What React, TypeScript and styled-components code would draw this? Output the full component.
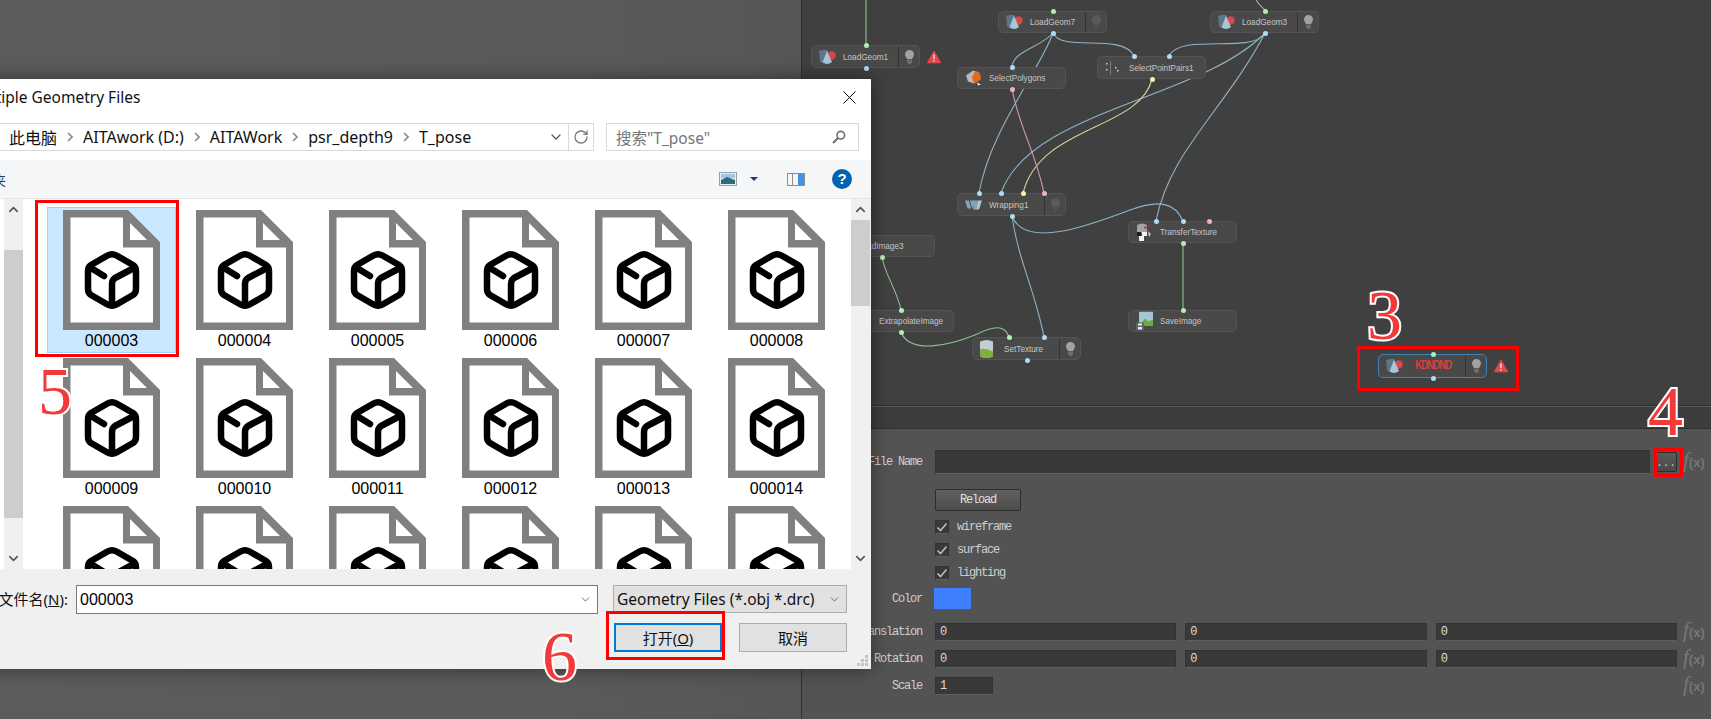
import React from 'react';
import styled, { createGlobalStyle } from 'styled-components';
import { ChevronDown, ChevronUp, RotateCw } from 'lucide-react';

const GlobalStyle = createGlobalStyle`
    html, body {
        margin: 0;
        padding: 0;
        background: #5a5a5a;
    }
    * {
        box-sizing: border-box;
    }
`;

const UI_FONT = `"Noto Sans", "Noto Sans CJK SC", sans-serif`;
const CANVAS_X = 802;

const PORT = {
    blue: '#aedcf5',
    green: '#b3eeb0',
    pink: '#f2b0c6',
    yellow: '#f2f2a8',
};

type PortColor = keyof typeof PORT;

interface PortDef {
    at: number;
    color: PortColor;
    side: 'top' | 'bottom';
}

const top = (at: number, color: PortColor): PortDef => ({ at, color, side: 'top' });
const bottom = (at: number, color: PortColor): PortDef => ({ at, color, side: 'bottom' });

const GeomIcon = () => (
    <svg width="17" height="15" viewBox="0 0 17 15">
        <path d="M0 1.5 L6 0 L9 1 L9 13 L4 14 L1 12 Z" fill="#5b7688" />
        <circle cx="12.5" cy="6" r="4.2" fill="#d9484c" />
        <path d="M8 1.5 L13 12.5 Q8 16.5 3.5 12.5 Z" fill="#a9c6d6" />
    </svg>
);

const PolygonIcon = () => (
    <svg width="17" height="17" viewBox="0 0 17 17">
        <path d="M1 6 L8 1 L14 3 L15 10 L9 14 L3 12 Z" fill="#b9b9b9" />
        <path d="M7 8 L10 1.5 L15 4 L16 10 L9 14 Z" fill="#e8691c" />
        <path d="M12 13 L16 15 L13 16 Z" fill="#eee" />
    </svg>
);

const WrapIcon = () => (
    <svg width="17" height="11" viewBox="0 0 17 11">
        <path d="M0 1 H4 L6 9 H2.5 Z M5 1 H9 L9 5 L7 9 Z M9 1 H13 L11 10 H8 Z" fill="#7fa5b8" />
        <path d="M13 1 H17 L14 10 H11 Z" fill="#a9c6d6" />
    </svg>
);

const PairsIcon = () => (
    <svg width="17" height="14" viewBox="0 0 17 14">
        <rect x="1" y="2" width="1.5" height="1.5" fill="#d0d0d0" />
        <rect x="1" y="8" width="1.5" height="1.5" fill="#d0d0d0" />
        <rect x="5" y="0" width="1" height="14" fill="#6f7d84" />
        <rect x="10" y="6" width="1.5" height="1.5" fill="#d0d0d0" />
        <rect x="12" y="9" width="1.5" height="1.5" fill="#d0d0d0" />
    </svg>
);

const TransferIcon = () => (
    <svg width="16" height="18" viewBox="0 0 16 18">
        <path d="M1 2 Q6 -1 11 2 V10 H1 Z" fill="#9ea3a8" />
        <rect x="8" y="3.5" width="3" height="2" fill="#c43a3a" />
        <rect x="1" y="9" width="4" height="4" fill="#1c1c1c" />
        <rect x="6" y="9" width="5" height="4" fill="#f2f2f2" />
        <rect x="3" y="13" width="5" height="5" fill="#f2f2f2" />
        <path d="M12 8 L15 11 L13 14 Z" fill="#c9c9c9" />
    </svg>
);

const SaveIcon = () => (
    <svg width="17" height="19" viewBox="0 0 17 19">
        <rect x="3" y="0" width="14" height="14" fill="#a4c7d4" />
        <path d="M3 14 L9 7 L12 10 L17 8 V14 Z" fill="#6cab3f" />
        <rect x="0" y="11" width="8" height="8" rx="1" fill="#5e646a" />
        <rect x="2" y="12" width="4" height="2" fill="#e6e6e6" />
        <rect x="2" y="15.5" width="4" height="2.5" fill="#e6e6e6" />
    </svg>
);

const TextureIcon = () => (
    <svg width="13" height="19" viewBox="0 0 13 19">
        <path d="M0 2 Q6.5 -1 13 2 V17 Q6.5 20 0 17 Z" fill="#c3ced0" />
        <path d="M0 10 Q5 8 13 12 V17 Q6.5 20 0 17 Z" fill="#7fb03d" />
    </svg>
);

const Bulb = ({ dim }: { dim?: boolean }) => (
    <svg width="9" height="14" viewBox="0 0 9 14">
        <path
            d="M4.5 0 C7 0 9 2 9 4.5 C9 6.5 7.5 7.5 7 9 H2 C1.5 7.5 0 6.5 0 4.5 C0 2 2 0 4.5 0 Z"
            fill={dim ? '#5a5a5a' : '#a2a2a2'}
        />
        <path d="M2 9.5 H7 V12 L5.5 14 H3.5 L2 12 Z" fill={dim ? '#505050' : '#6e6e6e'} />
    </svg>
);

const WarnIcon = () => (
    <svg width="14" height="13" viewBox="0 0 14 13">
        <path d="M7 0.5 L13.7 12.5 H0.3 Z" fill="#e2494b" stroke="#e2494b" strokeLinejoin="round" />
        <rect x="6.3" y="4" width="1.4" height="4.6" fill="#f4dcdc" />
        <rect x="6.3" y="9.6" width="1.4" height="1.4" fill="#f4dcdc" />
    </svg>
);

const nodes: {
    label: string;
    x: number;
    y: number;
    h: number;
    textAt?: number;
    icon?: React.ReactNode;
    bulb?: 'on' | 'dim';
    warn?: boolean;
    ports: PortDef[];
}[] = [
    { label: 'LoadGeom7', x: 998, y: 11, h: 22, icon: <GeomIcon />, bulb: 'dim', ports: [top(55, 'green'), bottom(55, 'blue')] },
    { label: 'LoadGeom1', x: 811, y: 45, h: 23, icon: <GeomIcon />, bulb: 'on', warn: true, ports: [top(55, 'green'), bottom(55, 'blue')] },
    { label: 'SelectPolygons', x: 957, y: 67, h: 22, icon: <PolygonIcon />, ports: [top(55, 'blue'), bottom(55, 'pink')] },
    { label: 'SelectPointPairs1', x: 1097, y: 56, h: 23, icon: <PairsIcon />, ports: [top(37, 'blue'), top(72, 'blue'), bottom(55, 'yellow')] },
    { label: 'LoadGeom3', x: 1210, y: 11, h: 22, icon: <GeomIcon />, bulb: 'on', ports: [top(55, 'green'), bottom(55, 'blue')] },
    { label: 'Wrapping1', x: 957, y: 193, h: 23, icon: <WrapIcon />, bulb: 'dim', ports: [top(22, 'blue'), top(44, 'blue'), top(66, 'yellow'), top(87, 'pink'), bottom(55, 'blue')] },
    { label: 'TransferTexture', x: 1128, y: 221, h: 22, icon: <TransferIcon />, ports: [top(28, 'blue'), top(55, 'blue'), top(81, 'pink'), bottom(55, 'green')] },
    { label: 'SaveImage', x: 1128, y: 310, h: 22, icon: <SaveIcon />, ports: [top(55, 'green')] },
    { label: 'LoadImage3', x: 826, y: 235, h: 22, ports: [bottom(56, 'green')] },
    { label: 'ExtrapolateImage', x: 845, y: 310, h: 22, textAt: 34, ports: [top(56, 'green'), bottom(56, 'green')] },
    { label: 'SetTexture', x: 972, y: 337, h: 23, icon: <TextureIcon />, bulb: 'on', ports: [top(37, 'green'), top(72, 'blue'), bottom(55, 'blue')] },
];

const wires: { d: string; color: string }[] = [
    { d: 'M866 0 V45', color: '#8fc08f' },
    { d: 'M1256 0 Q1261 7 1265 10', color: '#8fc08f' },
    { d: 'M1053 33 C1040 48 1015 50 1012 66', color: '#8fb3c6' },
    { d: 'M1053 33 C1062 53 1122 32 1134 56', color: '#8fb3c6' },
    { d: 'M1053 33 C1040 70 990 130 979 193', color: '#8fb3c6' },
    { d: 'M1265 33 C1252 55 1182 32 1169 56', color: '#8fb3c6' },
    { d: 'M1265 33 C1200 100 1030 110 1001 193', color: '#8fb3c6' },
    { d: 'M1265 33 C1225 110 1170 150 1156 221', color: '#8fb3c6' },
    { d: 'M1152 79 C1140 130 1040 125 1023 193', color: '#d5d59a' },
    { d: 'M1012 89 C1020 130 1035 150 1044 193', color: '#d79aad' },
    { d: 'M1012 216 C1025 250 1090 225 1130 210 C1160 199 1175 203 1183 221', color: '#8fb3c6' },
    { d: 'M1012 216 C1018 260 1035 290 1044 337', color: '#8fb3c6' },
    { d: 'M882 257 C885 275 897 290 901 310', color: '#8fc08f' },
    { d: 'M901 332 C910 355 950 345 975 335 C995 325 1005 325 1009 337', color: '#8fc08f' },
    { d: 'M1183 243 V310', color: '#8fc08f' },
];

const fileNames = [
    '000003', '000004', '000005', '000006', '000007', '000008',
    '000009', '000010', '000011', '000012', '000013', '000014',
    '000015', '000016', '000017', '000018', '000019', '000020',
];

const crumbs = ['此电脑', 'AITAwork (D:)', 'AITAWork', 'psr_depth9', 'T_pose'];

const FileIcon = () => (
    <svg width="97" height="120" viewBox="0 0 97 120">
        <path d="M0 0 H65 L97 32 V120 H0 Z" fill="#808080" />
        <path d="M7.5 7.5 H60 V37.5 H90 V112.5 H7.5 Z" fill="#fff" />
        <path d="M67 13 L84 30 H67 Z" fill="#fff" />
        <g fill="none" stroke="#000" strokeWidth="6.5" strokeLinejoin="round" strokeLinecap="round">
            <path d="M44.5 45.5 Q49 43 53.5 45.5 L70 55 Q73 57 73 61 V79 Q73 83 70 85 L53.5 94.5 Q49 97 44.5 94.5 L28 85 Q25 83 25 79 V61 Q25 57 28 55 Z" />
            <path d="M71 58 L52 68 Q49 70 49 74 V95" />
            <path d="M28 58 L41 66" />
        </g>
    </svg>
);

const ResizeGrip = () => (
    <svg width="12" height="12" viewBox="0 0 12 12" fill="#c4c4c4">
        <rect x="8" y="0" width="3" height="3" />
        <rect x="4" y="4" width="3" height="3" />
        <rect x="8" y="4" width="3" height="3" />
        <rect x="0" y="8" width="3" height="3" />
        <rect x="4" y="8" width="3" height="3" />
        <rect x="8" y="8" width="3" height="3" />
    </svg>
);

const ScrollTrack = ({ thumbOffset, thumbHeight }: { thumbOffset: number; thumbHeight: number }) => (
    <ScrollBar>
        <ScrollArrow>
            <ChevronUp size={15} strokeWidth={2.4} />
        </ScrollArrow>
        <ScrollThumb $offset={thumbOffset} $height={thumbHeight} />
        <ScrollArrow $end>
            <ChevronDown size={15} strokeWidth={2.4} />
        </ScrollArrow>
    </ScrollBar>
);

const Fx = () => (
    <FxMark>
        <i>f</i>(x)
    </FxMark>
);

const CheckRow = ({ label }: { label: string }) => (
    <PropRow $mt={9}>
        <PropLabel />
        <CheckLine>
            <CheckBox>
                <svg width="12" height="10" viewBox="0 0 12 10">
                    <path d="M1.5 5.5 L4.5 8.5 L10.5 1.5" fill="none" stroke="#bdbdbd" strokeWidth="1.6" />
                </svg>
            </CheckBox>
            <PropText>{label}</PropText>
        </CheckLine>
    </PropRow>
);

const App: React.FC = () => {
    return (
        <Page>
            <GlobalStyle />
            <Backdrop />
            <Editor>
                <Canvas>
                    <Wires viewBox={`${CANVAS_X} 0 909 406`}>
                        {wires.map((wire) => (
                            <path key={wire.d} d={wire.d} stroke={wire.color} fill="none" strokeWidth="1.1" />
                        ))}
                    </Wires>
                    {nodes.map((node) => (
                        <Node key={node.label} $x={node.x - CANVAS_X} $y={node.y} $h={node.h}>
                            <NodeIcon>{node.icon}</NodeIcon>
                            <NodeLabel $at={node.textAt ?? 32}>{node.label}</NodeLabel>
                            {node.bulb && (
                                <BulbCell>
                                    <Bulb dim={node.bulb === 'dim'} />
                                </BulbCell>
                            )}
                            {node.warn && (
                                <NodeWarn>
                                    <WarnIcon />
                                </NodeWarn>
                            )}
                            {node.ports.map((port) => (
                                <Port key={`${port.side}${port.at}`} $at={port.at} $color={PORT[port.color]} $side={port.side} />
                            ))}
                        </Node>
                    ))}
                    <Node $x={1378 - CANVAS_X} $y={354} $h={24} $selected>
                        <NodeIcon>
                            <GeomIcon />
                        </NodeIcon>
                        <ErrorLabel>KDNDND</ErrorLabel>
                        <BulbCell>
                            <Bulb />
                        </BulbCell>
                        <NodeWarn>
                            <WarnIcon />
                        </NodeWarn>
                        <Port $at={55} $color={PORT.green} $side="top" />
                        <Port $at={55} $color={PORT.blue} $side="bottom" />
                    </Node>
                </Canvas>
                <TabBar />
                <PropPanel>
                    <PropRow $mt={0}>
                        <PropLabel>File Name</PropLabel>
                        <FileField>
                            <TextField $h={24} />
                            <BrowseButton>...</BrowseButton>
                        </FileField>
                        <Fx />
                    </PropRow>
                    <PropRow $mt={15}>
                        <PropLabel />
                        <ReloadButton>Reload</ReloadButton>
                    </PropRow>
                    <CheckRow label="wireframe" />
                    <CheckRow label="surface" />
                    <CheckRow label="lighting" />
                    <PropRow $mt={8}>
                        <PropLabel>Color</PropLabel>
                        <Swatch />
                    </PropRow>
                    <PropRow $mt={14}>
                        <PropLabel>Translation</PropLabel>
                        <TripleField>
                            <TextField>0</TextField>
                            <TextField>0</TextField>
                            <TextField>0</TextField>
                        </TripleField>
                        <Fx />
                    </PropRow>
                    <PropRow $mt={9}>
                        <PropLabel>Rotation</PropLabel>
                        <TripleField>
                            <TextField>0</TextField>
                            <TextField>0</TextField>
                            <TextField>0</TextField>
                        </TripleField>
                        <Fx />
                    </PropRow>
                    <PropRow $mt={9}>
                        <PropLabel>Scale</PropLabel>
                        <ScaleField>1</ScaleField>
                        <Fx />
                    </PropRow>
                </PropPanel>
            </Editor>

            <Dialog>
                <TitleBar>
                    <Title>Multiple Geometry Files</Title>
                    <svg width="13" height="13" viewBox="0 0 13 13">
                        <path d="M0.5 0.5 L12.5 12.5 M12.5 0.5 L0.5 12.5" stroke="#000" strokeWidth="1" />
                    </svg>
                </TitleBar>
                <AddressRow>
                    <AddressBox>
                        <Crumbs>
                            {crumbs.map((crumb, i) => (
                                <React.Fragment key={crumb}>
                                    {i > 0 && (
                                        <CrumbArrow viewBox="0 0 6 10" width="6" height="10">
                                            <path d="M1 1 L5 5 L1 9" />
                                        </CrumbArrow>
                                    )}
                                    <span>{crumb}</span>
                                </React.Fragment>
                            ))}
                        </Crumbs>
                        <AddressDrop>
                            <ChevronDown size={16} strokeWidth={1.8} />
                        </AddressDrop>
                        <RefreshCell>
                            <RotateCw size={16} strokeWidth={2} />
                        </RefreshCell>
                    </AddressBox>
                    <SearchBox>
                        <span>搜索"T_pose"</span>
                        <svg width="14" height="14" viewBox="0 0 14 14">
                            <circle cx="8.8" cy="5.2" r="3.8" fill="none" stroke="#6d6d6d" strokeWidth="1.6" />
                            <path d="M6 8 L1 13" stroke="#6d6d6d" strokeWidth="2" />
                        </svg>
                    </SearchBox>
                </AddressRow>
                <Toolbar>
                    <NewFolder>新建文件夹</NewFolder>
                    <ToolSpacer />
                    <svg width="18" height="14" viewBox="0 0 18 14">
                        <rect x="0.5" y="0.5" width="17" height="13" fill="#e8eef2" stroke="#9a9fa3" />
                        <rect x="2" y="2" width="14" height="4" fill="#9cc7e4" />
                        <path d="M2 8 L8 5 L16 8 V12 H2 Z" fill="#2f6a78" />
                    </svg>
                    <ToolCaret />
                    <svg width="18" height="13" viewBox="0 0 18 13">
                        <rect x="0.5" y="0.5" width="17" height="12" fill="#f5f6f7" stroke="#8b8f93" />
                        <rect x="5" y="1" width="1" height="11" fill="#8b8f93" />
                        <rect x="11" y="1" width="6" height="11" fill="#3c95e3" />
                    </svg>
                    <HelpBadge>?</HelpBadge>
                </Toolbar>
                <Main>
                    <LeftNav>
                        <ScrollTrack thumbOffset={30} thumbHeight={268} />
                    </LeftNav>
                    <FileGrid>
                        {fileNames.map((name, i) => (
                            <FileItem key={name} $selected={i === 0}>
                                <FileIcon />
                                <FileName>{name}</FileName>
                            </FileItem>
                        ))}
                    </FileGrid>
                    <ScrollTrack thumbOffset={0} thumbHeight={86} />
                </Main>
                <BottomBar>
                    <FileRow>
                        <FileLabel>
                            文件名(<u>N</u>):
                        </FileLabel>
                        <NameInput>
                            <span>000003</span>
                            <ChevronDown size={13} strokeWidth={1.5} color="#555" />
                        </NameInput>
                        <TypeCombo>
                            <span>Geometry Files (*.obj *.drc)</span>
                            <ChevronDown size={13} strokeWidth={1.5} color="#555" />
                        </TypeCombo>
                    </FileRow>
                    <ButtonRow>
                        <DialogButton $primary>
                            打开(<u>O</u>)
                        </DialogButton>
                        <DialogButton>取消</DialogButton>
                    </ButtonRow>
                    <GripSlot>
                        <ResizeGrip />
                    </GripSlot>
                </BottomBar>
            </Dialog>

            <RedBox $x={35} $y={200} $w={144} $h={157} />
            <RedBox $x={606} $y={611} $w={119} $h={49} />
            <RedBox $x={1357} $y={346} $w={162} $h={45} />
            <RedBox $x={1654} $y={448} $w={29} $h={29} />

            <Annotation $x={38} $y={357} $size={68}>5</Annotation>
            <Annotation $x={542} $y={622} $size={70}>6</Annotation>
            <Annotation $x={1367} $y={281} $size={70}>3</Annotation>
            <Annotation $x={1648} $y={377} $size={70}>4</Annotation>
        </Page>
    );
};
export default App;

const Page = styled.div`
    position: relative;
    display: flex;
    width: 1711px;
    height: 719px;
    overflow: hidden;
`;

const Backdrop = styled.div`
    flex: 0 0 801px;
    background: linear-gradient(90deg, #5c5c5c, #5a5a5a 70%, #565656);
`;

const Editor = styled.div`
    flex: 1;
    display: flex;
    flex-direction: column;
    border-left: 1px solid #2f2f2f;
    min-width: 0;
`;

const Canvas = styled.div`
    position: relative;
    height: 406px;
    background: #404040;
    border-bottom: 1px solid #2e2e2e;
`;

const Wires = styled.svg`
    position: absolute;
    inset: 0;
    width: 909px;
    height: 406px;
`;

const Node = styled.div<{ $x: number; $y: number; $h: number; $selected?: boolean }>`
    position: absolute;
    left: ${(p) => p.$x}px;
    top: ${(p) => p.$y}px;
    width: 109px;
    height: ${(p) => p.$h}px;
    background: #494949;
    border: 1px solid ${(p) => (p.$selected ? '#3f82b8' : '#545454')};
    border-radius: 5px;
`;

const NodeIcon = styled.div`
    position: absolute;
    left: 7px;
    top: 50%;
    transform: translateY(-50%);
    display: flex;
`;

const NodeLabel = styled.span<{ $at: number }>`
    position: absolute;
    left: ${(p) => p.$at - 1}px;
    top: 50%;
    transform: translateY(-50%);
    font: 8.2px "Liberation Sans", sans-serif;
    color: #c6c6c6;
    white-space: nowrap;
`;

const ErrorLabel = styled.span`
    position: absolute;
    left: 36px;
    top: 50%;
    transform: translateY(-50%);
    font: 12px "Liberation Mono", monospace;
    letter-spacing: -1.2px;
    color: #e84040;
    white-space: nowrap;
`;

const BulbCell = styled.div`
    position: absolute;
    right: 0;
    top: 0;
    bottom: 0;
    width: 21px;
    display: flex;
    align-items: center;
    justify-content: center;
    border-left: 1px solid #333;
`;

const NodeWarn = styled.div`
    position: absolute;
    left: 115px;
    top: 50%;
    transform: translateY(-50%);
    display: flex;
`;

const Port = styled.i<{ $at: number; $color: string; $side: 'top' | 'bottom' }>`
    position: absolute;
    left: ${(p) => p.$at - 3.5}px;
    ${(p) => p.$side}: -3.5px;
    width: 5px;
    height: 5px;
    border-radius: 50%;
    background: ${(p) => p.$color};
`;

const TabBar = styled.div`
    height: 23px;
    background: #3d3d3d;
    border-top: 1px solid #5a5a5a;
    border-bottom: 1px solid #2e2e2e;
`;

const PropPanel = styled.div`
    flex: 1;
    background: #535353;
    padding-top: 21px;
    display: flex;
    flex-direction: column;
`;

const PropRow = styled.div<{ $mt: number }>`
    display: grid;
    grid-template-columns: 133px 742px 34px;
    align-items: center;
    margin-top: ${(p) => p.$mt}px;
`;

const PROP_FONT = `12px "Liberation Mono", "Noto Sans CJK SC", monospace`;

const PropLabel = styled.span`
    padding-right: 13px;
    text-align: right;
    font: ${PROP_FONT};
    letter-spacing: -1.2px;
    color: #cfcfcf;
    white-space: nowrap;
`;

const PropText = styled.span`
    font: ${PROP_FONT};
    letter-spacing: -1.2px;
    color: #cfcfcf;
`;

const TextField = styled.div<{ $h?: number }>`
    flex: 1;
    height: ${(p) => p.$h ?? 18}px;
    background: #393939;
    border: 1px solid #333;
    border-bottom-color: #5f5f5f;
    font: ${PROP_FONT};
    line-height: 16px;
    padding-left: 4px;
    color: #dcdcdc;
`;

const FileField = styled.div`
    display: flex;
    align-items: center;
    gap: 5px;
`;

const BrowseButton = styled.div`
    flex: 0 0 20px;
    height: 20px;
    background: linear-gradient(#5a5a5a, #4a4a4a);
    border: 1px solid #2d2d2d;
    border-radius: 2px;
    text-align: center;
    font: 10px/22px "Liberation Mono", monospace;
    letter-spacing: 0.5px;
    color: #ddd;
`;

const TripleField = styled.div`
    display: flex;
    gap: 9px;
`;

const ScaleField = styled(TextField)`
    justify-self: start;
    width: 58px;
`;

const ReloadButton = styled.div`
    justify-self: start;
    width: 86px;
    height: 22px;
    background: linear-gradient(#616161, #4c4c4c);
    border: 1px solid #2d2d2d;
    border-radius: 2px;
    text-align: center;
    font: ${PROP_FONT};
    line-height: 20px;
    letter-spacing: -1.2px;
    color: #e0e0e0;
`;

const CheckLine = styled.div`
    display: flex;
    align-items: center;
    gap: 8px;
    height: 14px;
`;

const CheckBox = styled.div`
    width: 14px;
    height: 14px;
    background: #393939;
    border: 1px solid #333;
    border-bottom-color: #5f5f5f;
    display: flex;
    align-items: center;
    justify-content: center;
`;

const Swatch = styled.div`
    justify-self: start;
    width: 37px;
    height: 21px;
    margin-left: -1px;
    background: #3e7fff;
`;

const FxMark = styled.span`
    padding-left: 6px;
    font: bold 13px "Liberation Sans", sans-serif;
    color: #777;
    white-space: nowrap;
    i {
        font: italic 21px "Liberation Serif", serif;
        line-height: 12px;
    }
`;

const Dialog = styled.div`
    position: absolute;
    left: -40px;
    top: 79px;
    width: 911px;
    height: 590px;
    display: flex;
    flex-direction: column;
    background: #fff;
    box-shadow: 0 0 18px rgba(0, 0, 0, 0.45);
    font-family: ${UI_FONT};
`;

const TitleBar = styled.div`
    flex: 0 0 44px;
    display: flex;
    align-items: center;
    justify-content: space-between;
    padding: 0 15px 8px 8px;
`;

const Title = styled.span`
    font-size: 15.5px;
    color: #111;
`;

const AddressRow = styled.div`
    flex: 0 0 28px;
    display: flex;
    gap: 12px;
    margin-bottom: 9px;
`;

const AddressBox = styled.div`
    flex: 0 0 634px;
    display: flex;
    align-items: center;
    border: 1px solid #d9d9d9;
    padding-left: 48px;
`;

const Crumbs = styled.div`
    flex: 1;
    display: flex;
    align-items: center;
    gap: 10px;
    font-size: 16px;
    color: #111;
`;

const CrumbArrow = styled.svg`
    path {
        fill: none;
        stroke: #8a8a8a;
        stroke-width: 1.6;
    }
`;

const AddressDrop = styled.div`
    display: flex;
    color: #555;
    padding-right: 2px;
`;

const RefreshCell = styled.div`
    flex: 0 0 25px;
    height: 100%;
    display: flex;
    align-items: center;
    justify-content: center;
    border-left: 1px solid #d9d9d9;
    color: #7a7a7a;
    margin-left: 2px;
`;

const SearchBox = styled.div`
    flex: 0 0 253px;
    display: flex;
    align-items: center;
    justify-content: space-between;
    border: 1px solid #d9d9d9;
    padding: 0 12px 0 9px;
    font-size: 15.5px;
    color: #777;
`;

const Toolbar = styled.div`
    flex: 0 0 39px;
    display: flex;
    align-items: center;
    background: #f5f6f7;
    border-bottom: 1px solid #e5e5e5;
    padding-right: 19px;
`;

const NewFolder = styled.div`
    flex: 0 0 46px;
    min-width: 0;
    display: flex;
    justify-content: flex-end;
    white-space: nowrap;
    font-size: 13px;
    color: #1e3a5f;
`;

const ToolSpacer = styled.div`
    flex: 1;
`;

const ToolCaret = styled.div`
    width: 0;
    height: 0;
    margin: 0 29px 0 13px;
    border-left: 4px solid transparent;
    border-right: 4px solid transparent;
    border-top: 4px solid #1f3f66;
`;

const HelpBadge = styled.div`
    width: 20px;
    height: 20px;
    margin-left: 27px;
    border-radius: 50%;
    background: #0063b1;
    color: #fff;
    font: bold 15px/20px "Liberation Sans", sans-serif;
    text-align: center;
`;

const Main = styled.div`
    flex: 0 0 370px;
    display: flex;
    padding-right: 1px;
    background: #f0f0f0;
    min-height: 0;
`;

const LeftNav = styled.div`
    flex: 0 0 66px;
    display: flex;
    background: #fff;
    padding: 0 3px 0 44px;
`;

const ScrollBar = styled.div`
    flex: 0 0 19px;
    display: flex;
    flex-direction: column;
    background: #f0f0f0;
`;

const ScrollArrow = styled.div<{ $end?: boolean }>`
    flex: 0 0 21px;
    display: flex;
    align-items: center;
    justify-content: center;
    color: #505050;
    margin-top: ${(p) => (p.$end ? 'auto' : '0')};
`;

const ScrollThumb = styled.div<{ $offset: number; $height: number }>`
    flex: 0 0 ${(p) => p.$height}px;
    margin-top: ${(p) => p.$offset}px;
    background: #cdcdcd;
`;

const FileGrid = styled.div`
    flex: 1;
    display: grid;
    grid-template-columns: repeat(6, 129px);
    grid-auto-rows: 146px;
    gap: 2px 4px;
    padding: 8px 0 0 21px;
    background: #fff;
    overflow: hidden;
`;

const FileItem = styled.div<{ $selected?: boolean }>`
    display: flex;
    flex-direction: column;
    align-items: center;
    padding-top: 3px;
    background: ${(p) => (p.$selected ? '#cce8ff' : 'transparent')};
    border: 1px solid ${(p) => (p.$selected ? '#99d1ff' : 'transparent')};
    svg {
        margin-top: -1px;
        flex: none;
    }
`;

const FileName = styled.span`
    font: 16px/18px "Liberation Sans", sans-serif;
    color: #000;
    margin-top: 2px;
`;

const BottomBar = styled.div`
    position: relative;
    flex: 1;
    display: flex;
    flex-direction: column;
    background: #f0f0f0;
`;

const FileRow = styled.div`
    display: flex;
    align-items: flex-start;
    margin-top: 16px;
`;

const FileLabel = styled.div`
    flex: 0 0 108px;
    text-align: right;
    font-size: 15px;
    line-height: 29px;
    color: #111;
`;

const NameInput = styled.div`
    flex: 0 0 522px;
    margin-left: 8px;
    height: 29px;
    display: flex;
    align-items: center;
    justify-content: space-between;
    padding: 0 5px 0 3px;
    background: #fff;
    border: 1px solid #7a7a7a;
    font: 16px "Liberation Sans", sans-serif;
    color: #000;
`;

const TypeCombo = styled.div`
    flex: 0 0 234px;
    margin-left: 15px;
    height: 28px;
    display: flex;
    align-items: center;
    justify-content: space-between;
    padding: 0 5px 0 3px;
    background: #e1e1e1;
    border: 1px solid #adadad;
    font-size: 15.5px;
    white-space: nowrap;
    color: #111;
`;

const ButtonRow = styled.div`
    display: flex;
    justify-content: flex-end;
    gap: 17px;
    margin-top: 9px;
    padding-right: 24px;
`;

const DialogButton = styled.div<{ $primary?: boolean }>`
    width: 108px;
    height: 29px;
    display: flex;
    align-items: center;
    justify-content: center;
    background: #e1e1e1;
    border: ${(p) => (p.$primary ? '2px solid #0078d7' : '1px solid #adadad')};
    font-size: 15px;
    color: #111;
`;

const GripSlot = styled.div`
    position: absolute;
    right: 2px;
    bottom: 2px;
    display: flex;
`;

const RedBox = styled.div<{ $x: number; $y: number; $w: number; $h: number }>`
    position: absolute;
    left: ${(p) => p.$x}px;
    top: ${(p) => p.$y}px;
    width: ${(p) => p.$w}px;
    height: ${(p) => p.$h}px;
    border: 3px solid #ff0000;
`;

const Annotation = styled.span<{ $x: number; $y: number; $size: number }>`
    position: absolute;
    left: ${(p) => p.$x}px;
    top: ${(p) => p.$y}px;
    font: ${(p) => p.$size}px/1 "Liberation Serif", serif;
    color: #f23a3a;
    -webkit-text-stroke: 4px #fff;
    paint-order: stroke fill;
`;
